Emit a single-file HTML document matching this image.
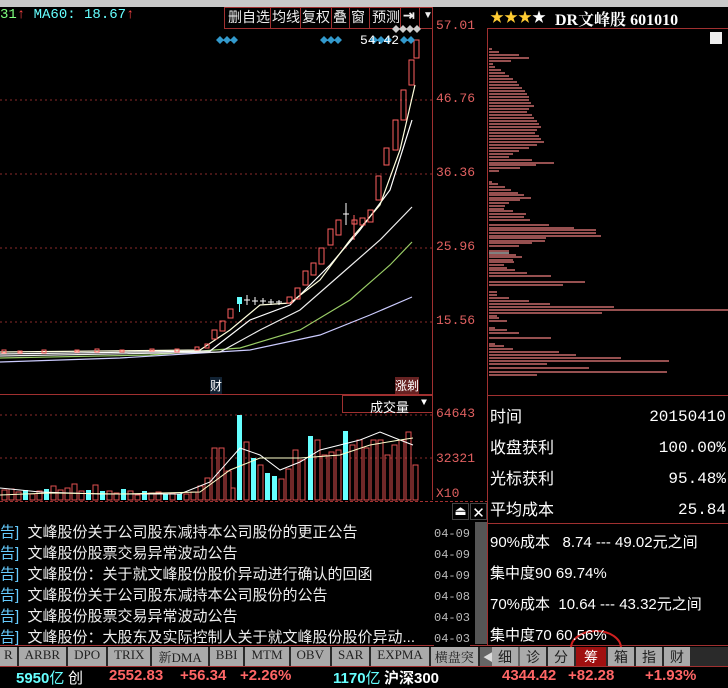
<!DOCTYPE html>
<html><head><meta charset="utf-8"><style>
*{margin:0;padding:0;box-sizing:border-box}
body{width:728px;height:685px;background:#000;overflow:hidden;position:relative;font-family:"Liberation Mono","Noto Sans CJK SC",monospace}
.a{position:absolute;white-space:nowrap}
.cn{font-family:"Liberation Sans","Noto Sans CJK SC",sans-serif}
</style></head><body>
<div class="a" style="left:0;top:0;width:728px;height:7px;background:#c8c8c8"></div>
<svg class="a" style="left:0;top:0" width="728" height="685">
<g stroke="#8a2a2a" stroke-dasharray="2,3" stroke-width="1">
<line x1="0" y1="100" x2="432" y2="100"/><line x1="0" y1="174" x2="432" y2="174"/>
<line x1="0" y1="248" x2="432" y2="248"/><line x1="0" y1="322" x2="432" y2="322"/>
<line x1="0" y1="415" x2="432" y2="415"/><line x1="0" y1="458" x2="432" y2="458"/>
</g>
<g stroke="#a03030" fill="none">
<line x1="432.5" y1="7" x2="432.5" y2="500"/>
<line x1="0" y1="394.5" x2="432" y2="394.5"/>
<line x1="487.5" y1="29" x2="487.5" y2="645"/>
<line x1="487" y1="28.5" x2="728" y2="28.5"/>
<line x1="487" y1="395.5" x2="728" y2="395.5"/>
<line x1="487" y1="523.5" x2="728" y2="523.5"/>
<rect x="342.5" y="395.5" width="90" height="17"/>
<rect x="224.5" y="7.5" width="208" height="21"/>
<line x1="0" y1="501.5" x2="487" y2="501.5" stroke-dasharray="3,2"/>
<line x1="0" y1="645.5" x2="728" y2="645.5"/>
<line x1="0" y1="666.5" x2="728" y2="666.5"/>
</g>
<g stroke="#a03030"><line x1="270.5" y1="8" x2="270.5" y2="28"/><line x1="300.5" y1="8" x2="300.5" y2="28"/><line x1="331.5" y1="8" x2="331.5" y2="28"/><line x1="349.5" y1="8" x2="349.5" y2="28"/><line x1="369.5" y1="8" x2="369.5" y2="28"/><line x1="400.5" y1="8" x2="400.5" y2="28"/><line x1="419.5" y1="8" x2="419.5" y2="28"/></g>
<g fill="none" stroke-width="1.2">
<polyline stroke="#ccf" points="0,362 120,358 250,350 320,335 370,315 412,297"/>
<polyline stroke="#9c6" points="0,358 150,355 240,348 300,330 350,300 390,265 412,242"/>
<polyline stroke="#eee" points="0,356 220,352 260,330 300,310 340,275 380,240 412,207"/>
<polyline stroke="#fff" points="0,354 210,351 250,320 290,305 330,265 360,230 390,190 412,120"/>
<polyline stroke="#ffd" points="0,352 200,350 230,330 260,305 290,303 320,280 350,240 380,205 400,150 415,85"/>
</g>
<g stroke="#ff6060" fill="none">
<rect x="2" y="350" width="4" height="3"/><rect x="18" y="351" width="4" height="2"/><rect x="42" y="350" width="4" height="3"/><rect x="75" y="350" width="4" height="2"/><rect x="95" y="349" width="4" height="3"/><rect x="120" y="350" width="4" height="2"/><rect x="150" y="349" width="4" height="2"/><rect x="175" y="349" width="4" height="3"/><rect x="195" y="347" width="4" height="3"/><rect x="205" y="344" width="4" height="4"/>
<rect x="212" y="330" width="5" height="9"/><rect x="220" y="321" width="5" height="10"/><rect x="228" y="309" width="5" height="9"/>
<rect x="287" y="297" width="5" height="6"/><rect x="295" y="288" width="5" height="11"/><rect x="303" y="271" width="5" height="14"/><rect x="311" y="263" width="5" height="12"/><rect x="319" y="248" width="5" height="16"/><rect x="328" y="229" width="5" height="16"/><rect x="336" y="220" width="5" height="15"/>
<line x1="354" y1="215" x2="354" y2="240"/><rect x="352" y="220" width="5" height="4"/><rect x="360" y="218" width="5" height="7"/><rect x="368" y="210" width="5" height="12"/><rect x="376" y="176" width="5" height="24"/><rect x="384" y="148" width="5" height="17"/><rect x="393" y="120" width="5" height="30"/><rect x="401" y="90" width="5" height="30"/><rect x="409" y="60" width="5" height="25"/><rect x="414" y="40" width="5" height="18"/>
</g>
<g stroke="#fff"><line x1="346" y1="203" x2="346" y2="225"/><line x1="343" y1="214" x2="349" y2="214"/>
<line x1="247" y1="295" x2="247" y2="305"/><line x1="244" y1="300" x2="250" y2="300"/><line x1="255" y1="297" x2="255" y2="305"/><line x1="252" y1="301" x2="258" y2="301"/><line x1="263" y1="298" x2="263" y2="304"/><line x1="260" y1="301" x2="266" y2="301"/><line x1="271" y1="299" x2="271" y2="305"/><line x1="268" y1="302" x2="274" y2="302"/><line x1="279" y1="300" x2="279" y2="305"/><line x1="276" y1="302" x2="282" y2="302"/></g>
<rect x="237" y="297" width="5" height="7" fill="#6ff"/><line x1="239.5" y1="304" x2="239.5" y2="312" stroke="#6ff"/>
<g stroke="#e05050" fill="none">
<rect x="2" y="490" width="5" height="10"/><rect x="9" y="489" width="5" height="11"/><rect x="16" y="492" width="5" height="8"/><rect x="30" y="494" width="5" height="6"/><rect x="37" y="491" width="5" height="9"/><rect x="51" y="486" width="5" height="14"/><rect x="58" y="490" width="5" height="10"/><rect x="65" y="488" width="5" height="12"/><rect x="72" y="484" width="5" height="16"/><rect x="79" y="491" width="5" height="9"/><rect x="93" y="485" width="5" height="15"/><rect x="107" y="491" width="5" height="9"/><rect x="114" y="493" width="5" height="7"/><rect x="128" y="491" width="5" height="9"/><rect x="135" y="495" width="5" height="5"/><rect x="149" y="493" width="5" height="7"/><rect x="156" y="492" width="5" height="8"/><rect x="170" y="493" width="5" height="7"/><rect x="184" y="494" width="5" height="6"/><rect x="191" y="492" width="5" height="8"/><rect x="198" y="486" width="5" height="14"/><rect x="205" y="478" width="5" height="22"/><rect x="212" y="448" width="5" height="52"/><rect x="219" y="448" width="5" height="52"/><rect x="226" y="471" width="5" height="29"/><rect x="231" y="488" width="4" height="12"/><rect x="244" y="442" width="5" height="58"/><rect x="258" y="465" width="5" height="35"/><rect x="279" y="479" width="5" height="21"/><rect x="286" y="469" width="5" height="31"/><rect x="293" y="450" width="5" height="50"/><rect x="300" y="460" width="5" height="40"/><rect x="315" y="440" width="5" height="60"/><rect x="322" y="455" width="5" height="45"/><rect x="329" y="452" width="5" height="48"/><rect x="336" y="450" width="5" height="50"/><rect x="350" y="445" width="5" height="55"/><rect x="357" y="440" width="5" height="60"/><rect x="364" y="448" width="5" height="52"/><rect x="371" y="440" width="5" height="60"/><rect x="378" y="440" width="5" height="60"/><rect x="385" y="455" width="5" height="45"/><rect x="392" y="445" width="5" height="55"/><rect x="399" y="440" width="5" height="60"/><rect x="406" y="432" width="5" height="68"/><rect x="413" y="465" width="5" height="35"/>
</g>
<g fill="#6ff">
<rect x="23" y="490" width="5" height="10"/><rect x="44" y="489" width="5" height="11"/><rect x="86" y="490" width="5" height="10"/><rect x="100" y="491" width="5" height="9"/><rect x="121" y="489" width="5" height="11"/><rect x="142" y="491" width="5" height="9"/><rect x="163" y="494" width="5" height="6"/><rect x="177" y="494" width="5" height="6"/><rect x="237" y="415" width="5" height="85"/><rect x="251" y="458" width="5" height="42"/><rect x="265" y="473" width="5" height="27"/><rect x="272" y="476" width="5" height="24"/><rect x="308" y="436" width="5" height="64"/><rect x="343" y="431" width="5" height="69"/>
</g>
<g fill="none" stroke-width="1">
<polyline stroke="#fff" points="0,488 40,492 100,494 180,494 210,482 240,448 260,455 280,470 300,462 320,450 340,445 360,440 380,432 400,440 413,445"/>
<polyline stroke="#ffc" points="0,495 50,493 120,494 200,492 230,470 260,458 300,458 340,455 370,445 400,440 413,438"/>
</g>
<g stroke="#f08080" stroke-width="1.3">
<path d="M489 49h3M489 52h10M489 55h30M489 58h40M489 61h22M489 64h4M489 67h6M489 70h12M489 73h16M489 76h20M489 79h24M489 82h28M489 85h30M489 88h33M489 91h36M489 94h38M489 97h40M489 100h40M489 103h42M489 106h45M489 109h40M489 112h38M489 115h43M489 118h45M489 121h48M489 124h50M489 127h52M489 130h48M489 133h46M489 136h50M489 139h52M489 142h55M489 145h48M489 148h40M489 151h30M489 154h24M489 157h20M489 160h43M489 163h65M489 165h47M489 168h31M489 171h10M489 182h3M489 184h9M489 187h16M489 190h22M489 193h29M489 195h35M489 198h42M489 200h31M489 203h20M489 206h16M489 209h15M489 211h24M489 214h37M489 217h35M489 220h41M489 225h60M489 228h85M489 230h107M489 233h107M489 236h112M489 238h57M489 241h56M489 243h43M489 246h30M489 251h20M489 255h27M489 257h33M489 260h24M489 262h25M489 265h15M489 268h18M489 270h26M489 273h38M489 276h62M489 282h96M489 285h74M489 292h8M489 295h8M489 298h20M489 301h40M489 304h61M489 307h125M489 310h239M489 313h113M489 316h8M489 318h10M489 321h18M489 328h6M489 330h18M489 333h30M489 338h62M489 344h6M489 346h15M489 349h24M489 352h70M489 355h87M489 358h132M489 361h180M489 364h58M489 368h100M489 372h178M489 375h48"/>
</g>
<line x1="489" y1="253" x2="509" y2="253" stroke="#fff"/>
<g fill="#39c">
<path d="M216 40l4-4 4 4-4 4zM223 40l4-4 4 4-4 4zM230 40l4-4 4 4-4 4zM320 40l4-4 4 4-4 4zM327 40l4-4 4 4-4 4zM334 40l4-4 4 4-4 4zM370 40l4-4 4 4-4 4zM377 40l4-4 4 4-4 4zM384 40l4-4 4 4-4 4zM400 40l4-4 4 4-4 4zM407 40l4-4 4 4-4 4z"/>
</g>
<g fill="#ccc"><path d="M392 29l4-4 4 4-4 4zM399 29l4-4 4 4-4 4zM406 29l4-4 4 4-4 4zM413 29l4-4 4 4-4 4z"/></g>
<ellipse cx="596" cy="648" rx="25" ry="17" fill="none" stroke="#d02020" stroke-width="2"/>
</svg>
<div class="a" style="left:0;top:7px;font-size:14px;color:#7fff7f">31<span style="color:#f44">↑</span> <span style="color:#6ff">MA60: 18.67</span><span style="color:#f44">↑</span></div>
<div class="a cn" style="left:228px;top:7px;font-size:14px;color:#eee">
<span class="a" style="left:0">删自选</span><span class="a" style="left:44px">均线</span><span class="a" style="left:74px">复权</span><span class="a" style="left:105px">叠</span><span class="a" style="left:123px">窗</span><span class="a" style="left:144px">预测</span><span class="a" style="left:175px;font-weight:bold">⇥</span><span class="a" style="left:195px;font-size:10px;top:3px">▼</span></div>
<div class="a" style="left:360px;top:33px;font-size:13px;color:#fff">54.42</div>
<div class="a" style="left:436px;top:18px;font-size:13px;color:#e06060">57.01</div>
<div class="a" style="left:436px;top:91px;font-size:13px;color:#e06060">46.76</div>
<div class="a" style="left:436px;top:165px;font-size:13px;color:#e06060">36.36</div>
<div class="a" style="left:436px;top:239px;font-size:13px;color:#e06060">25.96</div>
<div class="a" style="left:436px;top:313px;font-size:13px;color:#e06060">15.56</div>
<div class="a" style="left:436px;top:406px;font-size:13px;color:#e06060">64643</div>
<div class="a" style="left:436px;top:451px;font-size:13px;color:#e06060">32321</div>
<div class="a" style="left:436px;top:486px;font-size:13px;color:#e06060">X10</div>
<div class="a cn" style="left:210px;top:377px;font-size:12px;color:#fff;background:#123">财</div>
<div class="a cn" style="left:395px;top:377px;font-size:12px;color:#fff;background:#622">涨剃</div>
<div class="a cn" style="left:370px;top:397px;font-size:13px;color:#fff">成交量</div>
<div class="a" style="left:421px;top:398px;font-size:10px;color:#fff">▼</div>
<div class="a cn" style="left:490px;top:7px;font-size:14px;color:#fc3">★★★<span style="color:#fff">★</span></div>
<div class="a" style="left:555px;top:7px;font-size:16px;color:#fff;font-family:'Liberation Serif','Noto Serif CJK SC',serif;font-weight:bold">DR文峰股 601010</div>
<div class="a" style="left:710px;top:32px;width:12px;height:12px;background:#eee"></div>
<div class="a cn" style="left:490px;top:402px;font-size:16px;color:#fff;line-height:31px;width:236px">
<div style="display:flex;justify-content:space-between"><span>时间</span><span style="font-family:'Liberation Mono'">20150410</span></div>
<div style="display:flex;justify-content:space-between"><span>收盘获利</span><span style="font-family:'Liberation Mono'">100.00%</span></div>
<div style="display:flex;justify-content:space-between"><span>光标获利</span><span style="font-family:'Liberation Mono'">95.48%</span></div>
<div style="display:flex;justify-content:space-between"><span>平均成本</span><span style="font-family:'Liberation Mono'">25.84</span></div>
</div>
<div class="a cn" style="left:490px;top:527px;font-size:15px;color:#fff;line-height:31px">
<div>90%成本 &nbsp;&nbsp;8.74 --- 49.02元之间</div>
<div>集中度90 69.74%</div>
<div>70%成本 &nbsp;10.64 --- 43.32元之间</div>
<div>集中度70 60.56%</div>
</div>
<div class="a" style="left:452px;top:503px;width:17px;height:17px;color:#fff;font-size:13px;text-align:center;border:1px solid #444">⏏</div>
<div class="a" style="left:470px;top:503px;width:17px;height:17px;color:#fff;font-size:15px;text-align:center;border:1px solid #444">✕</div>
<div class="a" style="left:475px;top:522px;width:12px;height:122px;background:#555"></div>
<div class="a cn" style="left:0;top:522px;font-size:15px;color:#eee;line-height:21px">
<div><span style="color:#6cf">告]</span>&nbsp; 文峰股份关于公司股东减持本公司股份的更正公告</div>
<div><span style="color:#6cf">告]</span>&nbsp; 文峰股份股票交易异常波动公告</div>
<div><span style="color:#6cf">告]</span>&nbsp; 文峰股份：关于就文峰股份股价异动进行确认的回函</div>
<div><span style="color:#6cf">告]</span>&nbsp; 文峰股份关于公司股东减持本公司股份的公告</div>
<div><span style="color:#6cf">告]</span>&nbsp; 文峰股份股票交易异常波动公告</div>
<div><span style="color:#6cf">告]</span>&nbsp; 文峰股份：大股东及实际控制人关于就文峰股份股价异动...</div>
</div>
<div class="a" style="left:434px;top:524px;font-size:12px;color:#bbb;line-height:21px;background:#000">04-09<br>04-09<br>04-09<br>04-08<br>04-03<br>04-03</div>
<div class="a" style="left:0;top:647px;width:728px;height:19px;background:#2a2a2a"></div>
<div class="a" style="left:0;top:647px;height:19px;font-size:13px;color:#222;display:flex;gap:2px;font-family:'Liberation Serif','Noto Serif CJK SC',serif">
<span style="background:#aaa;padding:0 4px">R</span><span style="background:#aaa;padding:0 6px">ARBR</span><span style="background:#aaa;padding:0 6px">DPO</span><span style="background:#aaa;padding:0 6px">TRIX</span><span style="background:#aaa;padding:0 6px">新DMA</span><span style="background:#aaa;padding:0 6px">BBI</span><span style="background:#aaa;padding:0 6px">MTM</span><span style="background:#aaa;padding:0 6px">OBV</span><span style="background:#aaa;padding:0 6px">SAR</span><span style="background:#aaa;padding:0 6px">EXPMA</span><span style="background:#aaa;padding:0 4px">横盘突</span><span style="background:#666;color:#ddd;padding:0 3px">◀</span><span style="background:#666;color:#ddd;padding:0 3px">▶</span>
</div>
<div class="a cn" style="left:492px;top:647px;height:19px;font-size:14px;color:#222;display:flex;gap:2px">
<span style="background:#aaa;padding:0 6px">细</span><span style="background:#aaa;padding:0 6px">诊</span><span style="background:#aaa;padding:0 6px">分</span><span style="background:#a01010;color:#fff;padding:0 8px">筹</span><span style="background:#aaa;padding:0 6px">箱</span><span style="background:#aaa;padding:0 6px">指</span><span style="background:#aaa;padding:0 6px">财</span>
</div>
<div class="a" style="left:0;top:667px;font-size:15px;font-weight:bold;color:#6ff;font-family:'Liberation Sans','Noto Sans CJK SC',sans-serif">
<span style="position:absolute;left:16px">5950<span style="font-weight:normal">亿</span></span><span style="position:absolute;left:68px;color:#fff;font-weight:normal">创</span>
<span style="position:absolute;left:109px;color:#f66">2552.83</span><span style="position:absolute;left:180px;color:#f66">+56.34</span><span style="position:absolute;left:240px;color:#f66">+2.26%</span>
<span style="position:absolute;left:333px">1170<span style="font-weight:normal">亿</span></span><span style="position:absolute;left:384px;color:#fff">沪深300</span>
<span style="position:absolute;left:502px;color:#f66">4344.42</span><span style="position:absolute;left:568px;color:#f66">+82.28</span><span style="position:absolute;left:645px;color:#f66">+1.93%</span>
</div>
</body></html>
